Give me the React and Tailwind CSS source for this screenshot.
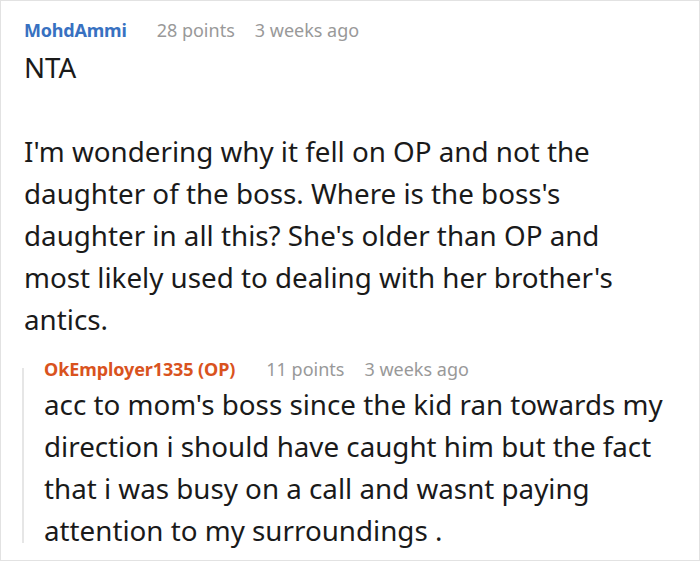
export default function App() {
  const font = { fontFamily: '"Noto Sans", "Open Sans", sans-serif' };
  return (
    <div className="w-[700px] h-[562px] bg-white" style={font}>
      <div className="w-[700px] h-[561px] border border-[#e2e2e2] pl-[23px] pr-[10px] pt-[16px]">
        <div className="flex items-baseline text-[18px] leading-[27px]">
          <span className="font-bold text-[#3871c1] mr-[30px] tracking-[-0.2px]">MohdAmmi</span>
          <span className="text-[#999999] mr-[20px]">28 points</span>
          <span className="text-[#999999]">3 weeks ago</span>
        </div>
        <div className="mt-[2px] text-[27.75px] leading-[42px] text-[#1a1a1a] whitespace-nowrap">
          <p className="mb-[42px]">NTA</p>
          <p>
            I'm wondering why it fell on OP and not the<br />
            daughter of the boss. Where is the boss's<br />
            daughter in all this? She's older than OP and<br />
            most likely used to dealing with her brother's<br />
            antics.
          </p>
        </div>
        <div className="mt-[16px] -ml-[2px] flex">
          <div className="w-[2px] bg-[#e6e6e6] mt-[12px] mb-[8px] shrink-0" />
          <div className="pl-[20px]">
            <div className="flex items-baseline text-[18px] leading-[27px]">
              <span className="font-bold text-[#d9531e] mr-[31px] tracking-[-0.1px]">OkEmployer1335 (OP)</span>
              <span className="text-[#999999] mr-[20px]">11 points</span>
              <span className="text-[#999999]">3 weeks ago</span>
            </div>
            <p className="text-[27.75px] leading-[42px] text-[#1a1a1a] whitespace-nowrap">
              acc to mom's boss since the kid ran towards my<br />
              direction i should have caught him but the fact<br />
              that i was busy on a call and wasnt paying<br />
              attention to my surroundings .
            </p>
          </div>
        </div>
      </div>
    </div>
  );
}
